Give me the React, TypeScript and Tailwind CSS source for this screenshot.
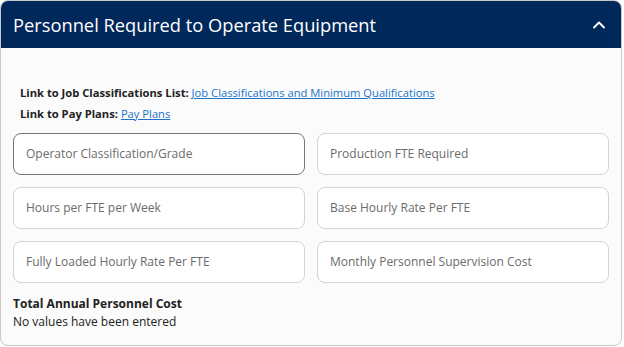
import { ChevronUp } from "lucide-react";

const Field = ({ label, active }: { label: string; active?: boolean }) => {
  return (
    <div
      className={`flex h-[42px] items-center rounded-lg border bg-white px-3 text-[12px] text-[#6b6b6b] ${
        active ? "border-[#767676]" : "border-[#d4d4d4]"
      }`}
    >
      {label}
    </div>
  );
};

export default function App() {
  return (
    <div className="h-[347px] w-[624px] bg-white font-['Open_Sans',sans-serif]">
      <div className="h-[346px] w-[622px] overflow-hidden rounded-lg border border-[#c8c8c8] bg-[#fbfbfb]">
        <div className="flex h-[47px] items-center justify-between bg-[#00285a] pl-3 pr-3">
          <h2 className="text-[18.3px] text-white">
            Personnel Required to Operate Equipment
          </h2>
          <ChevronUp className="h-5 w-5 text-white" strokeWidth={2.25} />
        </div>
        <div className="px-3 pt-[37px]">
          <div className="space-y-[4px] pl-[7px] text-[11.2px] text-[#222]">
            <p>
              <span className="font-bold">Link to Job Classifications List: </span>
              <a href="#" className="text-[#1a73c8] underline">
                Job Classifications and Minimum Qualifications
              </a>
            </p>
            <p>
              <span className="font-bold">Link to Pay Plans: </span>
              <a href="#" className="text-[#1a73c8] underline">
                Pay Plans
              </a>
            </p>
          </div>
          <div className="mt-[10px] grid grid-cols-2 gap-x-3 gap-y-3">
            <Field label="Operator Classification/Grade" active />
            <Field label="Production FTE Required" />
            <Field label="Hours per FTE per Week" />
            <Field label="Base Hourly Rate Per FTE" />
            <Field label="Fully Loaded Hourly Rate Per FTE" />
            <Field label="Monthly Personnel Supervision Cost" />
          </div>
          <div className="mt-[12px] text-[12px] text-[#222]">
            <p className="font-bold">Total Annual Personnel Cost</p>
            <p>No values have been entered</p>
          </div>
        </div>
      </div>
    </div>
  );
}
